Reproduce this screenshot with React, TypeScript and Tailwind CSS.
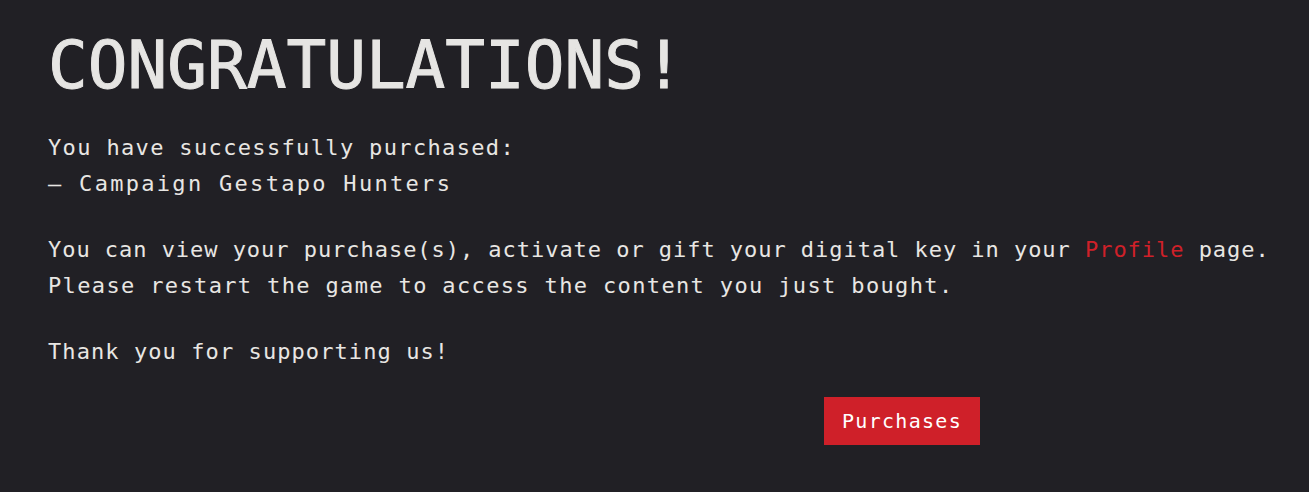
export default function App() {
  return (
    <div className="min-h-[492px] w-full overflow-hidden bg-[#212025] pl-12 pt-[26px] text-[#e8e6e3] [font-family:'DejaVu_Sans_Mono',monospace]">
      <h1 className="text-[66px] leading-[80px] text-[#e6e5e3] [-webkit-text-stroke:1px_#e6e5e3]">CONGRATULATIONS!</h1>
      <div className="mt-[24px] whitespace-nowrap text-[22px] leading-[36px]">
        <p className="tracking-[1.35px]">You have successfully purchased:</p>
        <p className="tracking-[2.3px]">– Campaign Gestapo Hunters</p>
        <p className="mt-[30px] tracking-[0.96px]">
          You can view your purchase(s), activate or gift your digital key in your{" "}
          <a className="text-[#cf2029]">Profile</a> page.
        </p>
        <p className="tracking-[1.36px]">Please restart the game to access the content you just bought.</p>
        <p className="mt-[30px] tracking-[1.08px]">Thank you for supporting us!</p>
      </div>
      <button className="ml-[776px] mt-[27px] h-12 w-[156px] bg-[#cf2029] text-[20px] tracking-[1.3px] text-white">
        Purchases
      </button>
    </div>
  );
}
